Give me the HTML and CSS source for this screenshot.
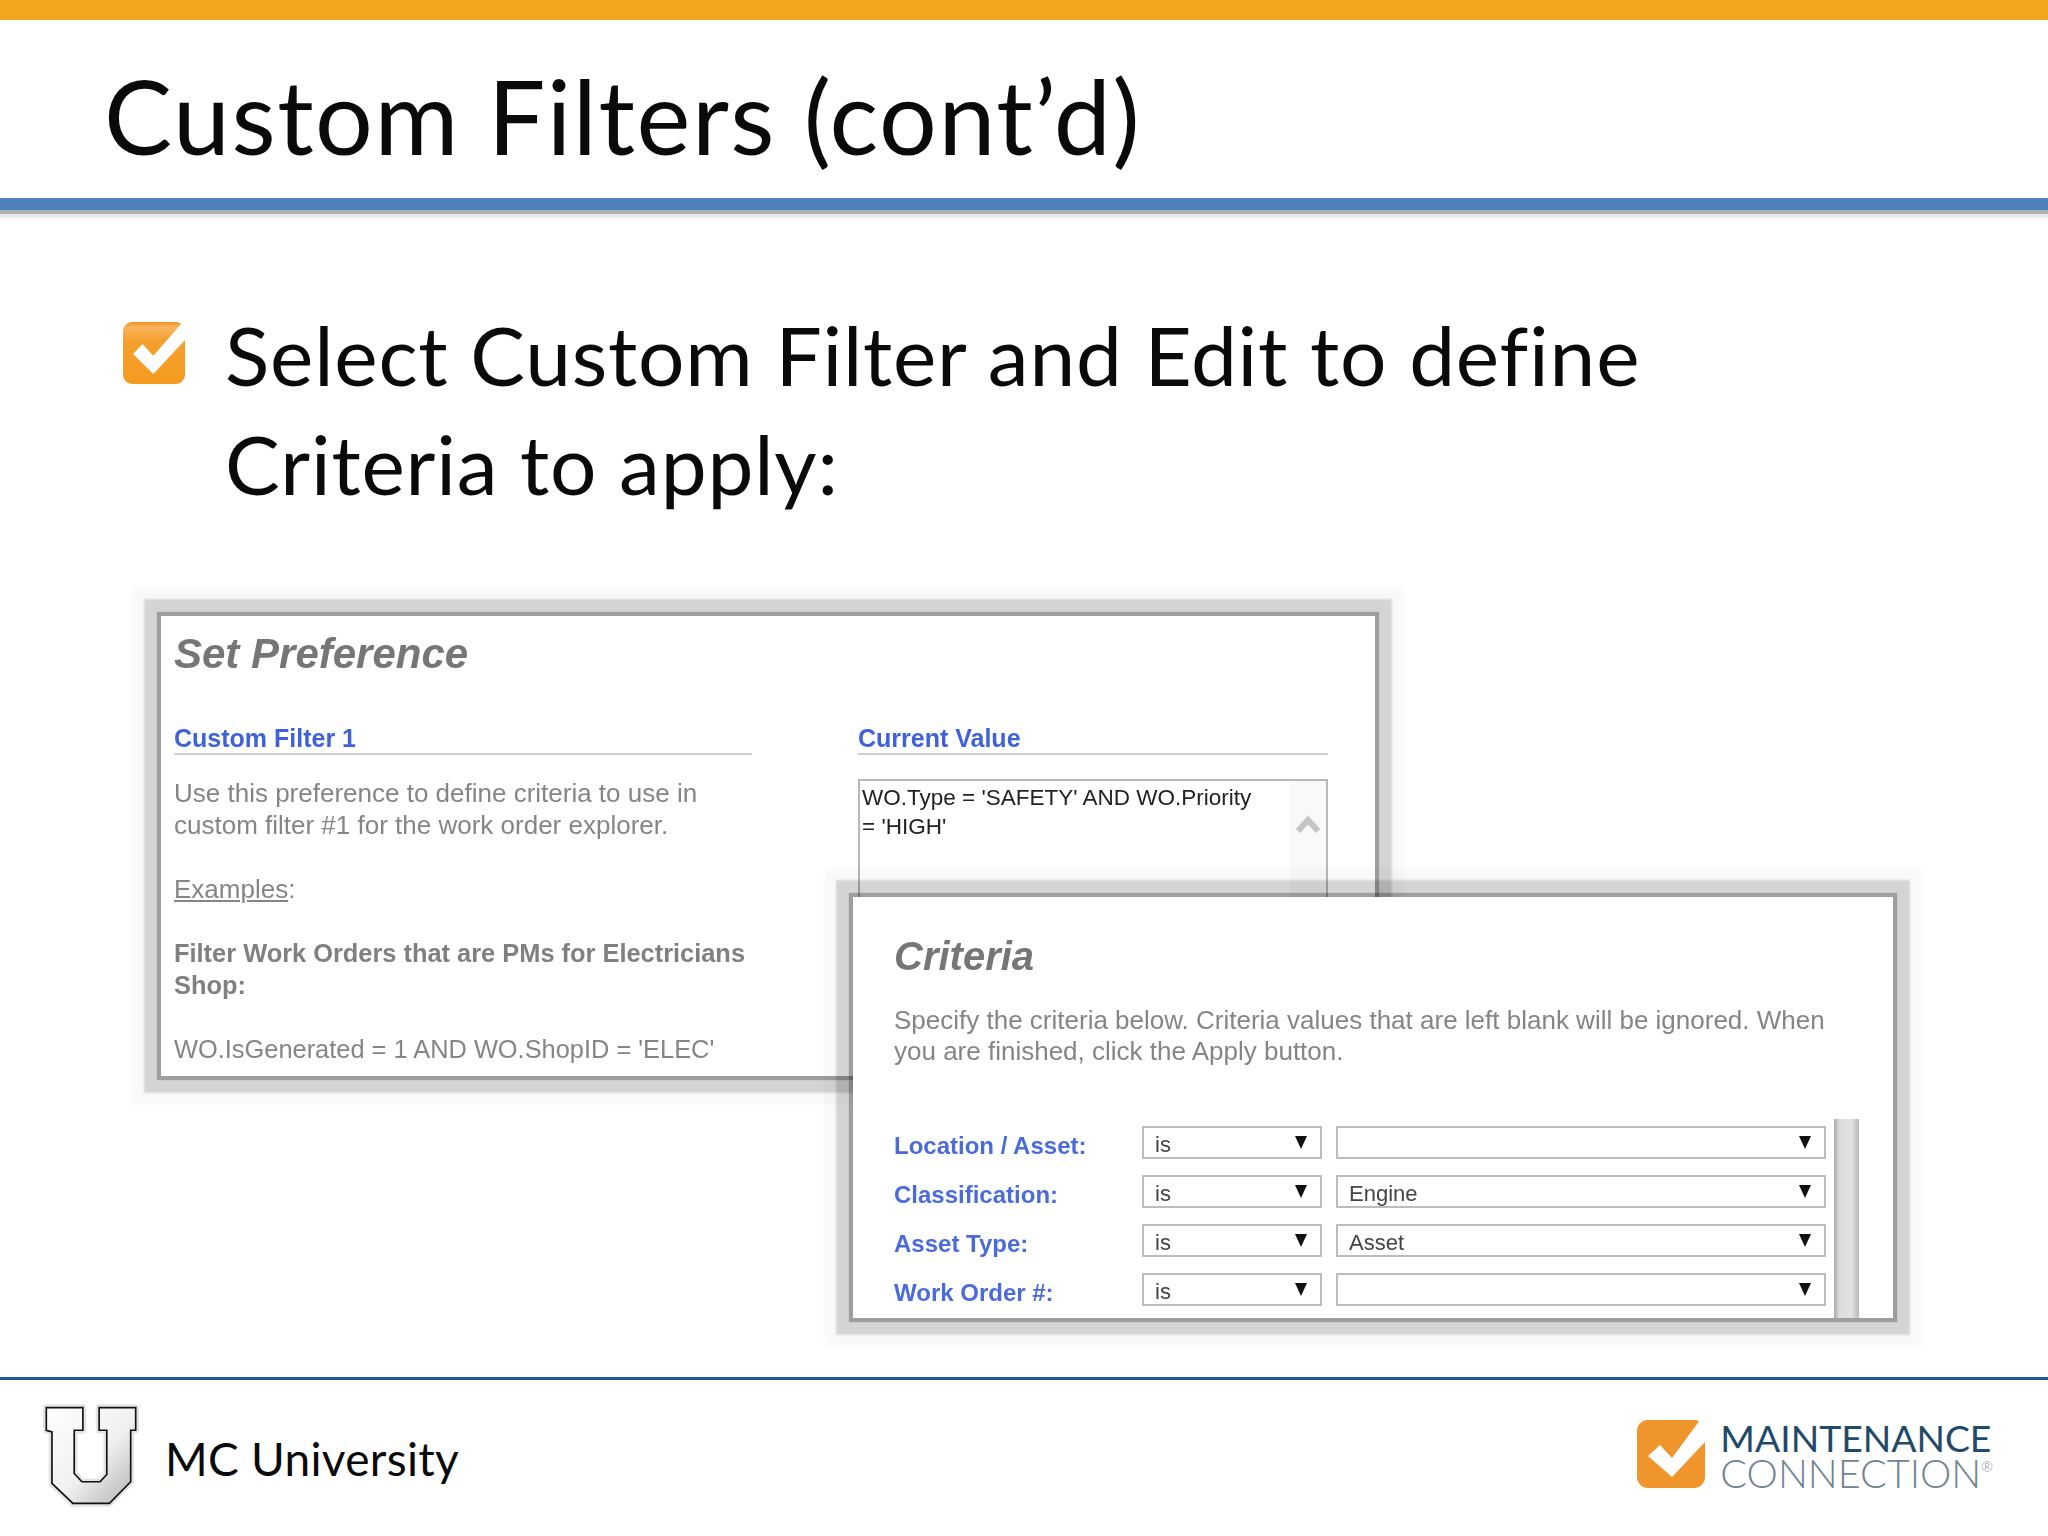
FILE: index.html
```html
<!DOCTYPE html>
<html lang="en">
<head>
<meta charset="utf-8">
<title>Custom Filters (cont'd)</title>
<link rel="stylesheet" href="styles.css">
</head>
<body>
<div class="slide">
  <div class="topbar"></div>
  <header class="head"><h1 class="title">Custom Filters (cont’d)</h1></header>
  <div class="rule"></div>
  <section class="bullet">
    <svg class="tick" viewBox="0 0 64 64" aria-hidden="true">
      <defs>
        <linearGradient id="tickfill" x1="0" y1="0" x2="0" y2="1">
          <stop offset="0" stop-color="#f08c1e"/>
          <stop offset=".08" stop-color="#f8b45e"/>
          <stop offset=".3" stop-color="#f4a02e"/>
          <stop offset="1" stop-color="#f59a1f"/>
        </linearGradient>
      </defs>
      <rect x="0" y="0" width="62" height="62" rx="9" fill="url(#tickfill)"/>
      <polygon points="10,32 19.5,22 30.3,33.7 58,2 64,0 64,16 30.3,52" fill="#fff"/>
    </svg>
    <p class="bullet-text">Select Custom Filter and Edit to define<br>Criteria to apply:</p>
  </section>
  <section class="stage">
    <article class="panel pref">
      <h2 class="panel-title">Set Preference</h2>
      <div class="pref-cols">
        <div class="pref-col">
          <h3 class="sub">Custom Filter 1</h3>
          <p class="copy">Use this preference to define criteria to use in<br>custom filter #1 for the work order explorer.</p>
          <p class="copy"><u>Examples</u>:</p>
          <p class="copy strong">Filter Work Orders that are PMs for Electricians<br>Shop:</p>
          <p class="copy query">WO.IsGenerated = 1 AND WO.ShopID = 'ELEC'</p>
        </div>
        <div class="pref-col">
          <h3 class="sub">Current Value</h3>
          <div class="value">
            <div class="value-text">WO.Type = 'SAFETY' AND WO.Priority<br>= 'HIGH'</div>
            <div class="value-track">
              <svg class="chev" viewBox="0 0 24 20" aria-hidden="true"><path d="M2 16 L12 5 L22 16" fill="none" stroke="#c4c4c4" stroke-width="6"/></svg>
            </div>
          </div>
        </div>
      </div>
    </article>
    <article class="panel crit">
      <h2 class="panel-title crit-title">Criteria</h2>
      <p class="desc">Specify the criteria below. Criteria values that are left blank will be ignored. When<br>you are finished, click the Apply button.</p>
      <div class="form">
        <div class="rows">
          <span class="lbl">Location / Asset:</span>
          <div class="sel"><span>is</span><i class="arrow"></i></div>
          <div class="sel"><span></span><i class="arrow"></i></div>
          <span class="lbl">Classification:</span>
          <div class="sel"><span>is</span><i class="arrow"></i></div>
          <div class="sel"><span>Engine</span><i class="arrow"></i></div>
          <span class="lbl">Asset Type:</span>
          <div class="sel"><span>is</span><i class="arrow"></i></div>
          <div class="sel"><span>Asset</span><i class="arrow"></i></div>
          <span class="lbl">Work Order #:</span>
          <div class="sel"><span>is</span><i class="arrow"></i></div>
          <div class="sel"><span></span><i class="arrow"></i></div>
        </div>
        <div class="scroll"></div>
      </div>
    </article>
  </section>
  <footer class="foot">
    <div class="brand">
      <svg class="ulogo" viewBox="125 160 295 325" aria-hidden="true">
        <defs>
          <linearGradient id="ufill" x1="0" y1="0" x2="1" y2="1">
            <stop offset="0" stop-color="#ffffff"/>
            <stop offset=".55" stop-color="#f0f0f0"/>
            <stop offset="1" stop-color="#b0b0b0"/>
          </linearGradient>
        </defs>
        <path d="M138 177H248V245H222V375L245 400H300L320 378V245H297V177H407V245H392V400L328 465H218L155 405V250L138 245Z" fill="none" stroke="#e4e4e4" stroke-width="20" stroke-linejoin="round"/>
        <path d="M138 177H248V245H222V375L245 400H300L320 378V245H297V177H407V245H392V400L328 465H218L155 405V250L138 245Z" fill="url(#ufill)" stroke="#111" stroke-width="5"/>
      </svg>
      <span class="brand-name">MC University</span>
    </div>
    <div class="mc">
      <svg class="mc-mark" viewBox="0 0 68 68" aria-hidden="true">
        <rect width="68" height="68" rx="11" fill="#f0952b"/>
        <polygon points="11,36 23,25 35,38 63,0 68,0 68,22 35,57" fill="#fff"/>
      </svg>
      <div class="mc-words">
        <span class="mc-top">MAINTENANCE</span>
        <span class="mc-bot">CONNECTION<sup class="reg">®</sup></span>
      </div>
    </div>
  </footer>
</div>
</body>
</html>
```

FILE: styles.css
```css
* { box-sizing: border-box; }
html, body { margin: 0; padding: 0; background: #fff; }
.slide {
  width: 2048px;
  height: 1536px;
  display: flex;
  flex-direction: column;
  overflow: hidden;
  background: #fff;
  font-family: Lato, "Open Sans", sans-serif;
  color: #0a0a0a;
}
.topbar { height: 20px; flex: none; background: #f2a51f; }
.head { height: 178px; flex: none; padding: 36px 0 0 104px; }
.title { margin: 0; font-size: 102px; line-height: 120px; font-weight: 400; letter-spacing: 1.6px; white-space: nowrap; }
.rule {
  height: 12px;
  flex: none;
  background: #4f81bd;
  box-shadow: 0 4px 0 #aeb2b2, 0 8px 3px #e8e8e8;
}
.bullet { flex: none; display: flex; align-items: flex-start; gap: 38px; padding: 90px 0 0 123px; }
.tick { width: 64px; height: 64px; margin-top: 22px; flex: none; }
.bullet-text { margin: 0; font-size: 82px; line-height: 109px; letter-spacing: .8px; white-space: nowrap; }
.stage { position: relative; flex: 1; font-family: "Liberation Sans", Arial, sans-serif; }
.panel {
  position: absolute;
  background: #fff;
  filter: blur(.4px);
  box-shadow:
    0 0 1px 4px rgba(0, 0, 0, .26),
    0 0 2px 17px rgba(0, 0, 0, .15),
    0 0 4px 29px rgba(0, 0, 0, .025);
}
.pref { left: 161px; top: 98px; width: 1214px; height: 460px; padding: 14px 13px 0; }
.crit { left: 853px; top: 379px; width: 1040px; height: 421px; padding: 35px 34px 0 41px; display: flex; flex-direction: column; }
.panel-title { margin: 0; font-size: 42px; line-height: 48px; font-style: italic; font-weight: 700; color: #767676; }
.crit-title { font-size: 40px; }
.pref-cols { display: grid; grid-template-columns: 578px 470px; column-gap: 106px; margin-top: 45px; }
.sub { margin: 0; font-size: 25px; line-height: 30px; font-weight: 700; color: #3f62dc; border-bottom: 2px solid #cfcfcf; }
.copy { margin: 0 0 32px; font-size: 26px; line-height: 32px; color: #858585; white-space: nowrap; }
.sub + .copy { margin-top: 22px; }
.strong { font-weight: 700; font-size: 25.4px; color: #808080; }
.query { font-size: 25.4px; }
.value { display: flex; height: 150px; margin-top: 24px; border: 2px solid #b8b8b8; border-bottom: 0; }
.value-text { flex: 1; padding: 2px 0 0 2px; font-size: 22.5px; line-height: 29px; color: #222; white-space: nowrap; }
.value-track { width: 36px; background: #f9f9f9; padding: 34px 6px 0 6px; }
.chev { display: block; width: 24px; height: 20px; }
.desc { margin: 25px 0 0; font-size: 26px; line-height: 31px; color: #858585; white-space: nowrap; }
.form { flex: 1; display: flex; gap: 8px; margin-top: 52px; min-height: 0; }
.rows {
  display: grid;
  grid-template-columns: 248px 180px 504px;
  grid-auto-rows: 33px;
  row-gap: 16px;
  padding-top: 7px;
  align-content: start;
}
.lbl { font-size: 24px; line-height: 33px; padding-top: 3px; font-weight: 700; color: #4a6bdc; white-space: nowrap; }
.sel {
  display: flex;
  align-items: center;
  justify-content: space-between;
  padding: 3px 13px 0 11px;
  border: 2px solid #bcbcbc;
  font-size: 22px;
  line-height: 27px;
  color: #444;
  background: #fff;
}
.sel + .sel { margin-left: 14px; }
.arrow { width: 0; height: 0; border-left: 6px solid transparent; border-right: 6px solid transparent; border-top: 13px solid #111; margin-top: -3px; }
.scroll { width: 25px; background: linear-gradient(90deg, #a9a9a9 0, #dcdcde 22%, #e2e2e4 70%, #b9b9b9 100%); }
.foot {
  flex: none;
  height: 159px;
  border-top: 3px solid #1f5a8c;
  display: flex;
  justify-content: space-between;
  padding: 22px 55px 0 42px;
}
.brand { display: flex; align-items: flex-start; gap: 25px; }
.ulogo { width: 98px; height: 108px; flex: none; }
.brand-name { font-size: 46px; line-height: 56px; margin-top: 29px; letter-spacing: .3px; white-space: nowrap; }
.mc { display: flex; gap: 15px; margin-top: 18px; }
.mc-mark { width: 68px; height: 68px; flex: none; }
.mc-words { display: flex; flex-direction: column; }
.mc-top { font-size: 37.3px; line-height: 35px; color: #1f4a6a; white-space: nowrap; }
.mc-bot { font-size: 39.6px; line-height: 35px; color: #708494; white-space: nowrap; font-weight: 300; }
.reg { font-size: 14px; line-height: 0; vertical-align: 16px; }
```
